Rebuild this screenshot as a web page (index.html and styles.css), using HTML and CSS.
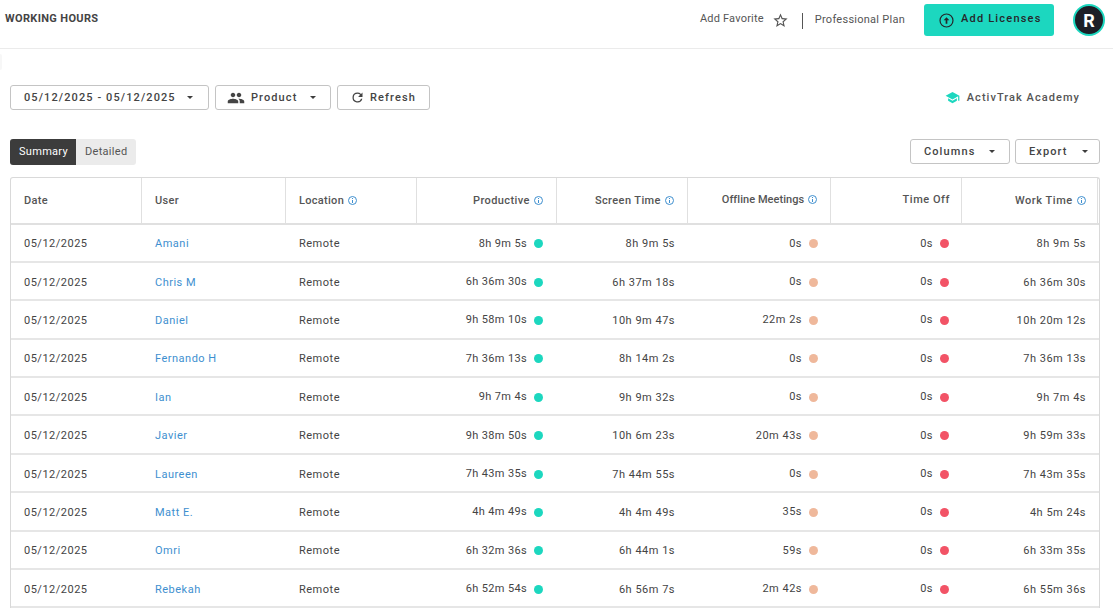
FILE: index.html
```html
<!DOCTYPE html>
<html lang="en">
<head>
  <meta charset="UTF-8" />
  <title>Working Hours</title>
  <link rel="stylesheet" href="styles.css">
</head>
<body>
  <!-- Top bar -->
  <header class="topbar">
    <h1>WORKING HOURS</h1>
    <div class="topbar-right">
      <span class="favorite">Add Favorite</span>
      <svg class="star" viewBox="0 0 24 24"><path d="M22 9.24l-7.19-.62L12 2 9.19 8.63 2 9.24l5.46 4.73L5.82 21 12 17.27 18.18 21l-1.63-7.03L22 9.24zM12 15.4l-3.76 2.27 1-4.28-3.32-2.88 4.38-.38L12 6.1l1.71 4.04 4.38.38-3.32 2.88 1 4.28L12 15.4z"/></svg>
      <span class="divider"></span>
      <span class="plan">Professional Plan</span>
      <button class="license-btn">
        <svg viewBox="0 0 24 24"><path d="M12 2a10 10 0 1 0 0 20 10 10 0 0 0 0-20zm0 18.300a8.300 8.300 0 1 1 0-16.600 8.300 8.300 0 0 1 0 16.600zM12 7.500l-4 4h2.800V16.500h2.400v-5h2.800z"/></svg>
        <span>Add Licenses</span>
      </button>
      <div class="avatar">R</div>
    </div>
  </header>
  <div class="side-tab"></div>

  <main class="content">
    <!-- Filters -->
    <div class="toolbar">
      <button class="btn date-btn">05/12/2025 - 05/12/2025<span class="caret"></span></button>
      <button class="btn product-btn">
        <svg class="people" viewBox="0 0 24 24"><path d="M16 11c1.66 0 2.99-1.34 2.99-3S17.660 5 16 5s-3 1.340-3 3 1.340 3 3 3zm-8 0c1.660 0 2.990-1.340 2.990-3S9.660 5 8 5 5 6.340 5 8s1.340 3 3 3zm0 2c-2.330 0-7 1.170-7 3.500V19h14v-2.500C15 14.170 10.330 13 8 13zm8 0c-.29 0-.62.02-.97.05 1.160.84 1.970 1.970 1.970 3.450V19h6v-2.500c0-2.330-4.670-3.500-7-3.500z"/></svg>
        Product<span class="caret"></span>
      </button>
      <button class="btn refresh-btn">
        <svg class="refresh" viewBox="0 0 24 24"><path d="M17.650 6.350A7.960 7.960 0 0 0 12 4a8 8 0 1 0 7.730 10h-2.080A6 6 0 1 1 12 6c1.660 0 3.140.69 4.220 1.780L13 11h7V4l-2.350 2.350z"/></svg>
        Refresh
      </button>
      <a class="academy">
        <svg viewBox="0 0 24 24"><path d="M5 13.180v4L12 21l7-3.820v-4L12 17l-7-3.820zM12 3 1 9l11 6 9-4.910V17h2V9L12 3z"/></svg>
        ActivTrak Academy
      </a>
    </div>

    <div class="view-row">
      <div class="tabs">
        <span class="tab active">Summary</span>
        <span class="tab">Detailed</span>
      </div>
      <div class="view-actions">
        <button class="btn columns-btn">Columns<span class="caret"></span></button>
        <button class="btn export-btn">Export<span class="caret"></span></button>
      </div>
    </div>

    <!-- Hours table -->
    <div class="grid-wrap">
      <table class="grid">
        <colgroup>
          <col class="c-date"><col class="c-user"><col class="c-loc"><col class="c-prod">
          <col class="c-screen"><col class="c-meet"><col class="c-off"><col class="c-work"><col>
        </colgroup>
        <thead>
          <tr>
            <th>Date</th>
            <th>User</th>
            <th>Location <i class="info"></i></th>
            <th class="num">Productive <i class="info"></i></th>
            <th class="num">Screen Time <i class="info"></i></th>
            <th class="num raised tight">Offline Meetings <i class="info"></i></th>
            <th class="num raised plain">Time Off</th>
            <th class="num wt">Work Time <i class="info"></i></th>
            <th class="filler"></th>
          </tr>
        </thead>
        <tbody>
          <tr><td>05/12/2025</td><td><a>Amani</a></td><td>Remote</td><td class="num prod">8h 9m 5s<i class="dot green"></i></td><td class="num">8h 9m 5s</td><td class="num up">0s<i class="dot peach"></i></td><td class="num up">0s<i class="dot red"></i></td><td class="num wt">8h 9m 5s</td><td></td></tr>
          <tr><td>05/12/2025</td><td><a>Chris M</a></td><td>Remote</td><td class="num prod">6h 36m 30s<i class="dot green"></i></td><td class="num">6h 37m 18s</td><td class="num up">0s<i class="dot peach"></i></td><td class="num up">0s<i class="dot red"></i></td><td class="num wt">6h 36m 30s</td><td></td></tr>
          <tr><td>05/12/2025</td><td><a>Daniel</a></td><td>Remote</td><td class="num prod">9h 58m 10s<i class="dot green"></i></td><td class="num">10h 9m 47s</td><td class="num up">22m 2s<i class="dot peach"></i></td><td class="num up">0s<i class="dot red"></i></td><td class="num wt">10h 20m 12s</td><td></td></tr>
          <tr><td>05/12/2025</td><td><a>Fernando H</a></td><td>Remote</td><td class="num prod">7h 36m 13s<i class="dot green"></i></td><td class="num">8h 14m 2s</td><td class="num up">0s<i class="dot peach"></i></td><td class="num up">0s<i class="dot red"></i></td><td class="num wt">7h 36m 13s</td><td></td></tr>
          <tr><td>05/12/2025</td><td><a>Ian</a></td><td>Remote</td><td class="num prod">9h 7m 4s<i class="dot green"></i></td><td class="num">9h 9m 32s</td><td class="num up">0s<i class="dot peach"></i></td><td class="num up">0s<i class="dot red"></i></td><td class="num wt">9h 7m 4s</td><td></td></tr>
          <tr><td>05/12/2025</td><td><a>Javier</a></td><td>Remote</td><td class="num prod">9h 38m 50s<i class="dot green"></i></td><td class="num">10h 6m 23s</td><td class="num up">20m 43s<i class="dot peach"></i></td><td class="num up">0s<i class="dot red"></i></td><td class="num wt">9h 59m 33s</td><td></td></tr>
          <tr><td>05/12/2025</td><td><a>Laureen</a></td><td>Remote</td><td class="num prod">7h 43m 35s<i class="dot green"></i></td><td class="num">7h 44m 55s</td><td class="num up">0s<i class="dot peach"></i></td><td class="num up">0s<i class="dot red"></i></td><td class="num wt">7h 43m 35s</td><td></td></tr>
          <tr><td>05/12/2025</td><td><a>Matt E.</a></td><td>Remote</td><td class="num prod">4h 4m 49s<i class="dot green"></i></td><td class="num">4h 4m 49s</td><td class="num up">35s<i class="dot peach"></i></td><td class="num up">0s<i class="dot red"></i></td><td class="num wt">4h 5m 24s</td><td></td></tr>
          <tr><td>05/12/2025</td><td><a>Omri</a></td><td>Remote</td><td class="num prod">6h 32m 36s<i class="dot green"></i></td><td class="num">6h 44m 1s</td><td class="num up">59s<i class="dot peach"></i></td><td class="num up">0s<i class="dot red"></i></td><td class="num wt">6h 33m 35s</td><td></td></tr>
          <tr><td>05/12/2025</td><td><a>Rebekah</a></td><td>Remote</td><td class="num prod">6h 52m 54s<i class="dot green"></i></td><td class="num">6h 56m 7s</td><td class="num up">2m 42s<i class="dot peach"></i></td><td class="num up">0s<i class="dot red"></i></td><td class="num wt">6h 55m 36s</td><td></td></tr>
        </tbody>
      </table>
    </div>
  </main>
</body>
</html>
```

FILE: styles.css
```css
* {
  box-sizing: border-box;
  margin: 0;
  padding: 0;
}
body {
  font-family: Roboto, Arial, sans-serif;
  font-size: 11px;
  color: #444;
  background-color: #fff;
  height: 616px;
  overflow: hidden;
}
svg {
  fill: currentColor;
  display: block;
  flex-shrink: 0;
}
button {
  font-family: inherit;
}

/* top bar */
.topbar {
  height: 49px;
  display: flex;
  justify-content: space-between;
  align-items: flex-start;
  padding: 4px 8px 0 5px;
  border-bottom: 1px solid #ebebeb;
}
.topbar h1 {
  font-size: 11px;
  font-weight: 700;
  line-height: 12px;
  margin-top: 9px;
  letter-spacing: .35px;
  color: #444;
}
.topbar-right {
  display: flex;
  align-items: center;
  height: 32px;
  color: #555;
  letter-spacing: .2px;
}
.favorite {
  margin-top: -3px;
}
.star {
  width: 17px;
  height: 17px;
  margin: 1px 0 0 8px;
}
.divider {
  width: 1px;
  height: 16px;
  background-color: #555;
  margin: 1px 12px 0 13px;
}
.plan {
  margin-top: -1px;
  letter-spacing: .26px;
}
.license-btn {
  display: flex;
  align-items: center;
  gap: 6px;
  width: 130px;
  height: 32px;
  margin-left: 19px;
  padding-left: 14px;
  border: none;
  border-radius: 3px;
  background-color: #1cd7bf;
  color: #26262a;
  font-size: 11px;
  font-weight: 500;
  letter-spacing: 1.2px;
}
.license-btn svg {
  width: 17px;
  height: 17px;
  margin-top: 1px;
}
.license-btn span {
  margin-top: -4px;
}
.avatar {
  width: 32px;
  height: 32px;
  margin-left: 19px;
  border-radius: 50%;
  border: 2px solid #1cd7bf;
  background-color: #1d1f27;
  color: #fff;
  font-size: 18px;
  font-weight: 700;
  letter-spacing: 0;
  display: flex;
  align-items: center;
  justify-content: center;
}
.side-tab {
  position: absolute;
  left: 0;
  top: 54px;
  width: 2px;
  height: 16px;
  border-radius: 0 2px 2px 0;
  background-color: #f7f7f7;
}

.content {
  padding: 36px 13px 0 10px;
}

/* buttons and filters */
.toolbar {
  display: flex;
  align-items: center;
  gap: 6px;
  height: 25px;
}
.btn {
  display: flex;
  align-items: center;
  height: 25px;
  border: 1px solid #c4c4c4;
  border-radius: 3px;
  background-color: #fff;
  color: #444;
  font-size: 11px;
  font-weight: 500;
  letter-spacing: 1.1px;
}
.caret {
  width: 0;
  height: 0;
  border-left: 3.500px solid transparent;
  border-right: 3.500px solid transparent;
  border-top: 3.500px solid #3d3d3d;
}
.date-btn {
  width: 199px;
  padding-left: 13px;
}
.date-btn .caret {
  margin-left: 11px;
}
.product-btn {
  width: 116px;
  padding-left: 11px;
}
.people {
  width: 18px;
  height: 18px;
  margin-right: 6px;
}
.product-btn .caret {
  margin-left: 13px;
}
.refresh-btn {
  width: 93px;
  padding-left: 12px;
}
.refresh {
  width: 15px;
  height: 15px;
  margin-right: 5px;
}
.academy {
  display: flex;
  align-items: center;
  gap: 7px;
  margin-left: auto;
  margin-right: 20px;
  font-weight: 500;
  letter-spacing: 1.05px;
  color: #555;
}
.academy svg {
  width: 15px;
  height: 15px;
  color: #1cd7bf;
}

.view-row {
  display: flex;
  justify-content: space-between;
  align-items: flex-start;
  margin-top: 29px;
  height: 26px;
}
.tabs {
  display: flex;
  height: 26px;
  border-radius: 3px;
  overflow: hidden;
  background-color: #ebebeb;
}
.tab {
  display: flex;
  align-items: center;
  padding: 0 9px 2px 9px;
  letter-spacing: .3px;
  color: #555;
}
.tab.active {
  background-color: #3c3c3c;
  color: #fff;
  padding: 0 8px 2px 9px;
}
.view-actions {
  display: flex;
  gap: 5px;
}
.view-actions .btn {
  padding-bottom: 1px;
}
.columns-btn {
  width: 100px;
  padding-left: 13px;
}
.columns-btn .caret {
  margin-left: 14px;
}
.export-btn {
  width: 85px;
  padding-left: 13px;
}
.export-btn .caret {
  margin-left: 14px;
}

/* table */
.grid-wrap {
  margin-top: 12px;
  width: 1090px;
  border: 1px solid #d9d9d9;
  border-bottom: none;
  border-radius: 3px 3px 0 0;
}
.grid {
  width: 100%;
  table-layout: fixed;
  border-collapse: separate;
  border-spacing: 0;
}
.c-date { width: 131px; }
.c-user { width: 144px; }
.c-loc { width: 131px; }
.c-prod { width: 140px; }
.c-screen { width: 131px; }
.c-meet { width: 143px; }
.c-off { width: 131px; }
.c-work { width: 136px; }
th, td {
  text-align: left;
  padding-left: 13px;
  letter-spacing: .5px;
  white-space: nowrap;
  border-bottom: 2px solid #e6e6e6;
}
th {
  height: 46.500px;
  font-weight: 500;
  color: #555;
  letter-spacing: .3px;
  border-right: 1px solid #e0e0e0;
  border-bottom-color: #e0e0e0;
}
th.filler {
  border-right: none;
}
th.num {
  letter-spacing: .4px;
}
th.raised {
  padding-bottom: 2px;
}
th.tight {
  letter-spacing: .05px;
}
td {
  height: 38.400px;
  padding-top: 2px;
  color: #444;
}
td a {
  color: #3e8fcf;
}
.num {
  text-align: right;
  padding-left: 0;
}
th.num {
  padding-right: 13px;
}
th.plain {
  padding-right: 11px;
  letter-spacing: .55px;
}
td.num {
  padding-right: 13px;
}
td.prod {
  padding-right: 14px;
  padding-top: 1px;
  letter-spacing: .35px;
}
td.up {
  padding-top: 1px;
}
td.prod .dot,
td.up .dot {
  top: 1.500px;
}
td.wt {
  padding-right: 12px;
}
th.wt {
  padding-right: 11px;
  letter-spacing: .55px;
}
.info {
  display: inline-block;
  width: 9px;
  height: 9px;
  margin-left: 1px;
  border: 1px solid #3e8fcf;
  border-radius: 50%;
  position: relative;
  top: 1px;
}
.info::before {
  content: "";
  position: absolute;
  left: 2.500px;
  top: 1px;
  width: 1px;
  height: 1px;
  background-color: #3e8fcf;
}
.info::after {
  content: "";
  position: absolute;
  left: 2.500px;
  top: 3px;
  width: 1px;
  height: 3px;
  background-color: #3e8fcf;
}
.dot {
  display: inline-block;
  width: 9px;
  height: 9px;
  border-radius: 50%;
  margin-left: 7px;
  position: relative;
  top: 1px;
}
.green { background-color: #1cd7bf; }
.peach { background-color: #efb89b; }
.red { background-color: #f25366; }
```
